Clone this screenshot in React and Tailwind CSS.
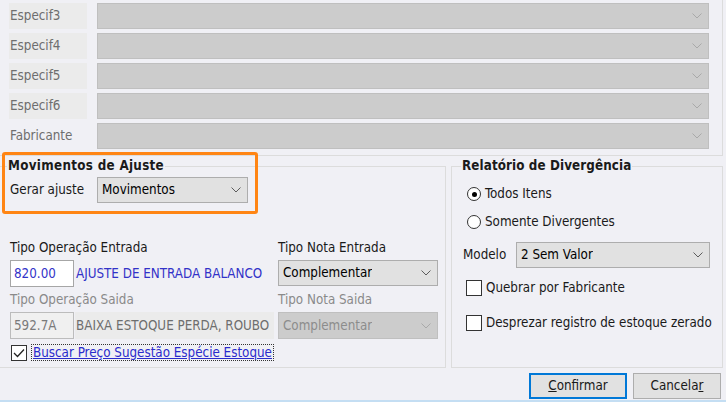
import React from "react";

const Chevron = ({ disabled }) => (
  <svg width="10" height="6" viewBox="0 0 10 6" className="shrink-0">
    <path
      d="M0.5 0.5 L5 5 L9.5 0.5"
      fill="none"
      className={disabled ? "stroke-[#a9a9a9]" : "stroke-[#5c5c5c]"}
      strokeWidth="1"
    />
  </svg>
);

const Select = ({ value, disabled, className }) => (
  <div
    className={
      "flex items-center justify-between pl-[4px] pr-[6px] border " +
      (disabled
        ? "bg-[#cccccc] border-[#bfbfbf] text-[#8c8c8c] "
        : "bg-[#e1e1e1] border-[#adadad] text-black ") +
      className
    }
  >
    <span className="truncate">{value}</span>
    <Chevron disabled={disabled} />
  </div>
);

const Radio = ({ checked }) => (
  <div className="w-[14px] h-[14px] rounded-full border border-[#333333] bg-white flex items-center justify-center shrink-0">
    {checked && <div className="w-[5px] h-[5px] rounded-full bg-black" />}
  </div>
);

const Check = ({ checked }) => (
  <div className="w-[16px] h-[16px] border border-[#333333] bg-white flex items-center justify-center shrink-0">
    {checked && (
      <svg width="12" height="10" viewBox="0 0 12 10">
        <path d="M1 5 L4.5 8.5 L11 1.5" fill="none" stroke="#222" strokeWidth="1.3" />
      </svg>
    )}
  </div>
);

export default function App() {
  const rows = [
    { label: "Especif3", cell: true },
    { label: "Especif4", cell: true },
    { label: "Especif5", cell: true },
    { label: "Especif6", cell: true },
    { label: "Fabricante", cell: false },
  ];
  return (
    <div className="relative w-[726px] h-[402px] overflow-hidden bg-[#f0f0f5] text-[13.3px] leading-[16px] text-black font-['DejaVu_Sans_Condensed','DejaVu_Sans',sans-serif] flex flex-col">
      {/* top panel */}
      <div className="h-[156px] w-[723px] shrink-0 border-r border-b border-[#dcdcdc] pt-[3px] flex flex-col gap-[4px]">
        {rows.map((r) => (
          <div key={r.label} className="flex h-[26px]">
            <div
              className={
                "ml-[9px] w-[78px] pl-[1px] flex items-center text-[#6e6e6e] " +
                (r.cell ? "bg-[#ebebeb]" : "")
              }
            >
              {r.label}
            </div>
            <Select value="" disabled className="ml-[10px] w-[612px]" />
          </div>
        ))}
      </div>

      {/* group boxes */}
      <div className="flex gap-[5px] pt-[10px] shrink-0">
        <div className="w-[446px] h-[202px] border-t border-r border-b border-[#dcdcdc] flex flex-col">
          <span className="-mt-[9px] ml-[7px] self-start px-[1px] bg-[#f0f0f5] font-bold tracking-[0.3px] text-[#1a1a1a]">
            Movimentos de Ajuste
          </span>
          <div className="mt-[3px] flex items-center h-[26px] pl-[10px]">
            <span className="w-[87px] text-[#1a1a1a]">Gerar ajuste</span>
            <Select value="Movimentos" className="w-[151px] h-[26px]" />
          </div>

          <div className="mt-[37px] pl-[10px] flex flex-col">
            <div className="flex h-[16px] text-[#1a1a1a]">
              <span className="w-[268px]">Tipo Operação Entrada</span>
              <span>Tipo Nota Entrada</span>
            </div>
            <div className="mt-[4px] flex h-[27px]">
              <div className="w-[64px] bg-white border border-[#a6a6a6] flex items-center pl-[3px] text-[#3232c8]">
                820.00
              </div>
              <div className="ml-[1px] w-[199px] flex items-center pl-[1px] text-[#3232c8] whitespace-nowrap">
                AJUSTE DE ENTRADA BALANCO
              </div>
              <Select value="Complementar" className="ml-[4px] w-[160px] h-[26px]" />
            </div>
            <div className="mt-[5px] flex h-[16px] text-[#8a8a8a]">
              <span className="w-[268px]">Tipo Operação Saida</span>
              <span>Tipo Nota Saida</span>
            </div>
            <div className="mt-[4px] flex h-[27px]">
              <div className="w-[64px] bg-[#f0f0f0] border border-[#bcbcbc] flex items-center pl-[3px] text-[#7a7a7a]">
                592.7A
              </div>
              <div className="ml-[1px] w-[199px] bg-[#ebebeb] flex items-center pl-[1px] text-[#6e6e6e] whitespace-nowrap">
                BAIXA ESTOQUE PERDA, ROUBO
              </div>
              <Select value="Complementar" disabled className="ml-[4px] w-[160px] h-[27px]" />
            </div>
            <div className="mt-[5px] flex items-center h-[17px]">
              <div className="ml-[1px]">
                <Check checked />
              </div>
              <span className="ml-[4px] border border-dotted border-[#333333] px-[1px] leading-[15px] underline text-[#2b2bcc] whitespace-nowrap">
                Buscar Preço Sugestão Espécie Estoque
              </span>
            </div>
          </div>
        </div>

        <div className="w-[272px] h-[202px] border border-[#dcdcdc] flex flex-col">
          <span className="-mt-[9px] ml-[9px] self-start px-[1px] bg-[#f0f0f5] font-bold tracking-[0.1px] text-[#1a1a1a]">
            Relatório de Divergência
          </span>
          <div className="mt-[12px] flex items-center h-[16px] pl-[15px]">
            <Radio checked />
            <span className="ml-[4px] text-[#1a1a1a]">Todos Itens</span>
          </div>
          <div className="mt-[12px] flex items-center h-[16px] pl-[15px]">
            <Radio />
            <span className="ml-[4px] text-[#1a1a1a]">Somente Divergentes</span>
          </div>
          <div className="mt-[12px] flex items-center h-[26px] pl-[11px]">
            <span className="w-[53px] text-[#1a1a1a]">Modelo</span>
            <Select value="2 Sem Valor" className="w-[194px] h-[26px]" />
          </div>
          <div className="mt-[11px] flex items-center h-[17px] pl-[14px]">
            <Check />
            <span className="ml-[4px] text-[#1a1a1a]">Quebrar por Fabricante</span>
          </div>
          <div className="mt-[18px] flex items-center h-[17px] pl-[14px]">
            <Check />
            <span className="ml-[4px] text-[#1a1a1a] whitespace-nowrap">
              Desprezar registro de estoque zerado
            </span>
          </div>
        </div>
      </div>

      {/* buttons */}
      <div className="mt-[5px] flex justify-end gap-[6px] pr-[5px] shrink-0">
        <button className="w-[98px] h-[26px] border-2 border-[#0078d7] bg-[#e1e1e1] text-[#1a1a1a]">
          <span className="underline">C</span>onfirmar
        </button>
        <button className="w-[88px] h-[26px] border border-[#adadad] bg-[#e1e1e1] text-[#1a1a1a]">
          Cancela<span className="underline">r</span>
        </button>
      </div>
      <div className="mt-[1px] h-[2px] bg-[#c4def3] shrink-0" />

      {/* orange highlight annotation */}
      <div className="absolute left-[2px] top-[152px] w-[256px] h-[62px] border-[3px] border-[#ff8514] rounded-[3px] pointer-events-none" />
    </div>
  );
}
